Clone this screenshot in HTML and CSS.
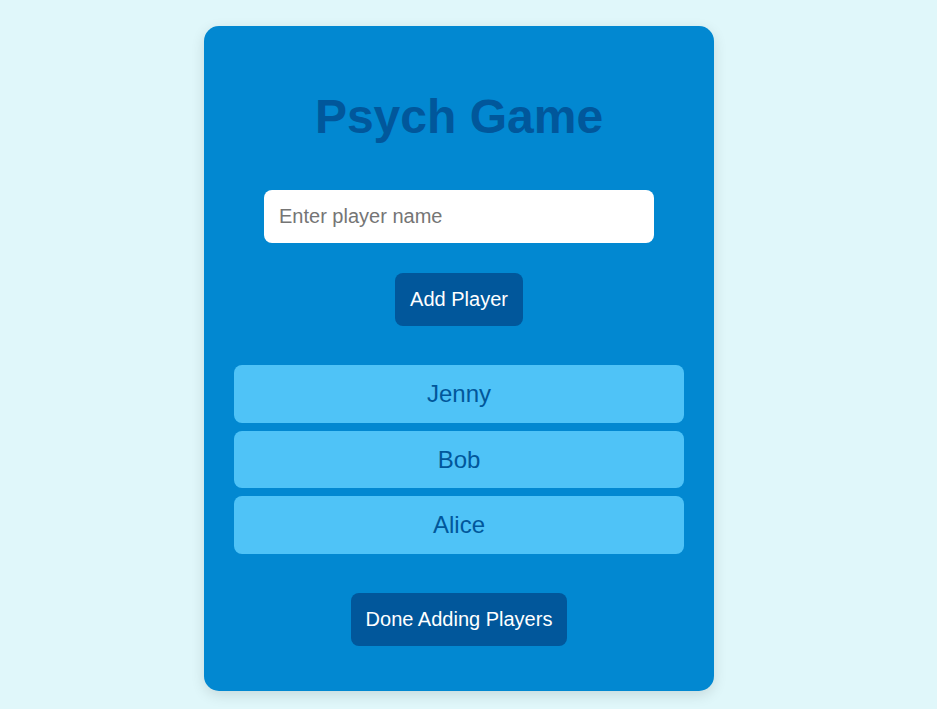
FILE: index.html
```html
<!DOCTYPE html>
<html lang="en">
<head>
<meta charset="utf-8">
<title>Psych Game</title>
<link rel="stylesheet" href="styles.css">
</head>
<body>
  <main class="card">
    <h1 class="title">Psych Game</h1>
    <input class="name-input" type="text" placeholder="Enter player name">
    <button class="btn btn-add">Add Player</button>
    <ul class="players">
      <li class="player">Jenny</li>
      <li class="player">Bob</li>
      <li class="player">Alice</li>
    </ul>
    <button class="btn btn-done">Done Adding Players</button>
  </main>
</body>
</html>
```
FILE: styles.css
```css
* { box-sizing: border-box; }
html, body { margin: 0; }
body {
  background: #e0f7fa;
  font-family: "Liberation Sans", Arial, sans-serif;
  display: flex;
  justify-content: center;
  padding: 26px 19px 18px 0;
}
.card {
  width: 510px;
  background: #0288d1;
  border-radius: 15px;
  padding: 30px 30px 45px;
  display: flex;
  flex-direction: column;
  align-items: center;
  box-shadow: 0 4px 14px rgba(0, 0, 0, 0.12);
}
.title {
  margin: 33px 0 46px;
  font-size: 48px;
  font-weight: bold;
  line-height: 55px;
  color: #01579b;
}
.name-input {
  width: 390px;
  height: 53px;
  padding: 0 15px;
  border: none;
  border-radius: 8px;
  font-family: inherit;
  font-size: 20px;
  color: #333;
  background: #fff;
  outline: none;
}
.name-input::placeholder { color: #757575; }
.btn {
  background: #01579b;
  color: #fff;
  border: none;
  border-radius: 8px;
  font-family: inherit;
  font-size: 20px;
  line-height: 23px;
  padding: 15px;
  cursor: pointer;
}
.btn-add { margin-top: 30px; }
.players {
  list-style: none;
  margin: 39px 0 0;
  padding: 0;
  width: 100%;
  display: flex;
  flex-direction: column;
  gap: 8px;
}
.player {
  background: #4fc3f7;
  color: #01579b;
  border-radius: 8px;
  text-align: center;
  font-size: 24px;
  line-height: 27.6px;
  padding: 15px;
}
.btn-done { margin-top: 39px; }
```
